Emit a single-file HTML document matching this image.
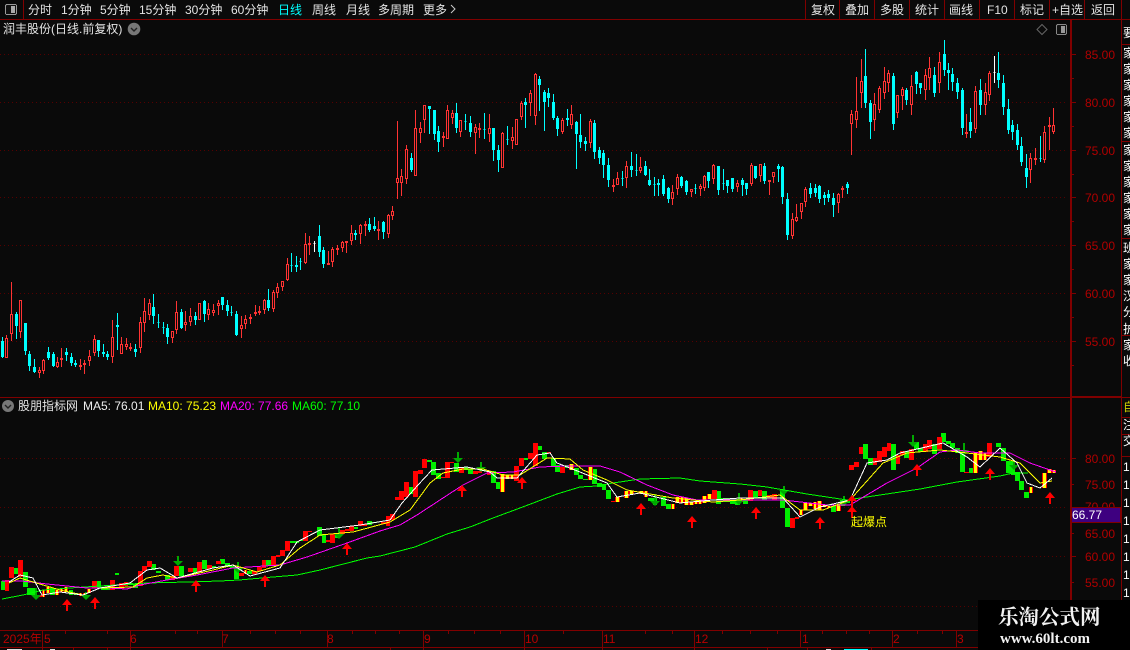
<!DOCTYPE html>
<html lang="zh"><head><meta charset="utf-8"><title>润丰股份</title>
<style>
html,body{margin:0;padding:0;background:#0a0a0a}
#p{position:relative;width:1130px;height:650px;overflow:hidden;background:#0a0a0a;font:12px/14px "Liberation Sans","WenQuanYi Zen Hei","Noto Sans CJK SC",sans-serif;color:#e4e4e4}
#p span{position:absolute;white-space:nowrap}
svg{position:absolute;left:0;top:0}
.a{color:#b00000;left:1085px}
.t{color:#b80000;top:632px;font-size:12px}
#wm{position:absolute;left:978px;top:600px;width:152px;height:50px;background:#000}
#wm div{position:absolute;font-family:"Liberation Serif","Noto Serif CJK SC",serif;font-weight:bold;color:#f2f2f2;white-space:nowrap}
#rc{position:absolute;left:1122px;top:20px;width:8px;height:580px;overflow:hidden;color:#fff}
#rc i{position:absolute;left:1px;font-style:normal;white-space:nowrap}
</style></head><body><div id="p">
<svg width="1130" height="650" shape-rendering="crispEdges" id="s">
<g id="grid" stroke="#560000" stroke-dasharray="1 3" fill="none">
<path d="M0 54.5H1067M0 102.5H1067M0 150.5H1067M0 197.5H1067M0 245.5H1067M0 293.5H1067M0 341.5H1067M0 458.5H1067M0 507.5H1067M0 556.5H1067M0 606.5H1067"/>
</g>
<g id="lo"></g><g id="up"></g>
<g fill="none" stroke="#800000">
<path d="M0 19.5H1130M23.5 0V19M805.5 0V19M839.5 0V19M874.5 0V19M909.5 0V19M944.5 0V19M979.5 0V19M1014.5 0V19M1049.5 0V19M1084.5 0V19"/>
<path d="M1121.5 0V600M0 397.5H1130M0 630.5H978M0 647.5H978" />
<path d="M1071 54.5H1076M1071 102.5H1076M1071 150.5H1076M1071 197.5H1076M1071 245.5H1076M1071 293.5H1076M1071 341.5H1076M1071 78.5H1074M1071 126.5H1074M1071 174.5H1074M1071 221.5H1074M1071 269.5H1074M1071 317.5H1074M1071 365.5H1074M1071 458.5H1076M1071 484.5H1074M1071 533.5H1074M1071 556.5H1076M1071 582.5H1074"/>
<path d="M42.5 631V647M130.5 631V647M222.5 631V647M327.5 631V647M423.5 631V647M524.5 631V647M602.5 631V647M694.5 631V647M800.5 631V647M892.5 631V647M956.5 631V647M65.5 631V634M107.5 631V634M175.5 631V634M197.5 631V634M250.5 631V634M275.5 631V634M300.5 631V634M352.5 631V634M375.5 631V634M399.5 631V634M448.5 631V634M474.5 631V634M500.5 631V634M563.5 631V634M645.5 631V634M672.5 631V634M722.5 631V634M750.5 631V634M777.5 631V634M822.5 631V634M846.5 631V634M869.5 631V634M917.5 631V634M942.5 631V634"/>
<path d="M42.5 648V650M73.5 648V650M107.5 648V650M130.5 648V650M390.5 648V650M423.5 648V650M524.5 648V650M602.5 648V650M694.5 648V650M767.5 648V650M807.5 648V650M871.5 648V650"/>
</g>
<path d="M1070 19h2v581h-2zM1071 396h50v2h-50z" fill="#800000"/>
<path d="M1122 44h8v1h-8zM1122 141h8v1h-8zM1122 238h8v1h-8zM1122 335h8v1h-8zM1122 417h8v1h-8zM1122 434h8v1h-8zM1122 456h8v1h-8z" fill="#800000"/>
<!-- toolbar icon -->
<rect x="5.5" y="4.5" width="11" height="10" rx="1.5" fill="#111" stroke="#999"/><rect x="11" y="6" width="4" height="7" fill="#aaa"/>
<!-- right icons -->
<path d="M1042 24.5l5 5-5 5-5-5z" fill="none" stroke="#666" shape-rendering="auto"/>
<rect x="1056.5" y="24.5" width="10" height="10" rx="1.5" fill="#111" stroke="#888"/><rect x="1061" y="26" width="4" height="7" fill="#999"/>
<!-- chevron circles -->
<g shape-rendering="auto"><circle cx="134" cy="29" r="6.3" fill="#777"/><path d="M131 28l3 3 3-3" fill="none" stroke="#222" stroke-width="1.4"/>
<circle cx="8" cy="406" r="6" fill="#777"/><path d="M5 405l3 3 3-3" fill="none" stroke="#222" stroke-width="1.4"/>
<path d="M451 5l4 4-4 4" fill="none" stroke="#ccc"/></g>
<!-- bottom fragments -->
<path d="M7 649h15v1H7zM50 649h5v1h-5zM826 649h5v1h-5z" fill="#ddd"/><path d="M844 649h24v1h-24z" fill="#0ff"/>
</svg>

<span style="left:28px;top:3px">分时</span><span style="left:61px;top:3px">1分钟</span><span style="left:100px;top:3px">5分钟</span><span style="left:139px;top:3px">15分钟</span><span style="left:185px;top:3px">30分钟</span><span style="left:231px;top:3px">60分钟</span><span style="left:278px;top:3px;color:#0ff">日线</span><span style="left:312px;top:3px">周线</span><span style="left:346px;top:3px">月线</span><span style="left:378px;top:3px">多周期</span><span style="left:423px;top:3px">更多</span>
<span style="left:811px;top:3px">复权</span><span style="left:845px;top:3px">叠加</span><span style="left:880px;top:3px">多股</span><span style="left:915px;top:3px">统计</span><span style="left:949px;top:3px">画线</span><span style="left:987px;top:3px">F10</span><span style="left:1020px;top:3px">标记</span><span style="left:1052px;top:3px">+自选</span><span style="left:1091px;top:3px">返回</span>
<span style="left:3px;top:22px">润丰股份(日线.前复权)</span>

<span class="a" style="top:48px">85.00</span><span class="a" style="top:96px">80.00</span><span class="a" style="top:144px">75.00</span><span class="a" style="top:191px">70.00</span><span class="a" style="top:239px">65.00</span><span class="a" style="top:287px">60.00</span><span class="a" style="top:335px">55.00</span>
<span class="a" style="top:452px">80.00</span><span class="a" style="top:478px">75.00</span><span class="a" style="top:500px">70.00</span><span class="a" style="top:527px">65.00</span><span class="a" style="top:550px">60.00</span><span class="a" style="top:576px">55.00</span>
<svg width="1130" height="16" style="top:507px;z-index:2"><rect x="1071.5" y=".5" width="49" height="15" fill="#3e0080" stroke="#800000"/></svg>
<span style="left:1072px;top:508px;color:#fff;z-index:3">66.77</span>

<span style="left:18px;top:399px">股朋指标网</span>
<span style="left:83px;top:399px;color:#eee">MA5: 76.01</span><span style="left:148px;top:399px;color:#ff0">MA10: 75.23</span><span style="left:220px;top:399px;color:#f0f">MA20: 77.66</span><span style="left:292px;top:399px;color:#0f0">MA60: 77.10</span>
<span style="left:851px;top:515px;color:#ff0">起爆点</span>

<span class="t" style="left:3px">2025年</span><span class="t" style="left:44px">5</span><span class="t" style="left:130px">6</span><span class="t" style="left:222px">7</span><span class="t" style="left:327px">8</span><span class="t" style="left:424px">9</span><span class="t" style="left:525px">10</span><span class="t" style="left:603px">11</span><span class="t" style="left:695px">12</span><span class="t" style="left:802px">1</span><span class="t" style="left:893px">2</span><span class="t" style="left:957px">3</span>

<div id="rc">
<i style="top:6px">要</i><i style="top:26px">家</i><i style="top:42px">家</i><i style="top:58px">家</i><i style="top:74px">家</i><i style="top:90px">家</i><i style="top:106px">家</i><i style="top:123px">家</i><i style="top:139px">家</i><i style="top:155px">家</i><i style="top:171px">家</i><i style="top:187px">家</i><i style="top:203px">家</i><i style="top:221px">班</i><i style="top:237px">家</i><i style="top:253px">家</i><i style="top:269px">汉</i><i style="top:285px">分</i><i style="top:302px">护</i><i style="top:318px">家</i><i style="top:334px">收</i>
<i style="top:380px;color:#cc0">自</i><i style="top:398px">注</i><i style="top:414px">交</i>
<i style="top:440px">1</i><i style="top:458px">1</i><i style="top:476px">1</i><i style="top:494px">1</i><i style="top:512px">1</i><i style="top:530px">1</i><i style="top:548px">1</i><i style="top:566px">1</i>
</div>
<div id="wm"><div style="left:20px;top:6px;font-size:20.5px;line-height:24px">乐淘公式网</div><div style="left:22px;top:32px;font-size:15px;line-height:15px">www.60lt.com</div></div>
</div>
<script>
var K="c 2 337 341 357 358;r 6 335 338 358 358;r 11 282 314 334 341;c 16 312 314 326 339;r 20 300 300 332 338;c 25 323 323 351 355;c 29 351 354 366 371;c 34 359 367 372 373;r 39 367 370 373 378;r 43 359 360 371 374;c 48 347 352 358 360;c 53 352 354 366 367;r 57 357 362 367 368;r 61 348 358 360 367;c 66 348 352 355 361;c 71 353 357 363 366;c 75 360 363 365 367;r 80 359 365 367 370;r 84 360 363 365 374;r 89 350 356 361 366;r 94 335 339 353 356;c 98 340 340 351 357;c 103 344 352 354 357;c 107 351 354 357 360;r 112 320 337 357 363;c 117 313 325 327 350;r 121 337 344 354 354;r 126 338 344 347 350;r 130 343 347 349 351;c 135 344 349 352 357;r 140 317 322 348 353;r 144 298 311 323 332;r 149 299 303 315 320;c 153 294 307 316 324;c 158 314 322 323 328;c 163 322 327 328 334;c 167 324 328 337 344;r 172 331 331 338 343;r 176 301 312 330 334;c 181 309 312 328 329;r 185 311 322 325 331;r 190 308 316 322 326;c 195 312 316 320 325;r 199 303 303 320 320;c 204 300 301 314 322;r 208 303 309 315 320;r 213 304 310 313 316;r 218 300 303 306 315;c 222 297 297 305 310;c 227 300 305 311 316;c 231 306 312 313 316;c 236 311 314 335 336;r 241 316 325 329 338;r 245 315 319 324 329;r 250 314 317 319 324;r 255 305 312 314 316;r 259 306 311 313 315;r 264 299 300 310 314;c 268 289 300 308 311;r 273 290 292 309 312;r 277 283 287 293 298;r 282 281 281 287 291;r 287 258 264 280 281;c 291 253 265 266 272;c 296 256 265 267 272;c 300 258 261 262 270;r 305 233 244 263 264;r 309 236 243 245 255;w 314 241 243 243 252;c 319 225 236 252 257;c 323 247 250 264 268;r 328 251 263 265 265;r 332 247 249 262 267;r 337 245 248 250 255;r 342 241 242 248 252;r 346 241 241 243 253;r 351 225 233 241 245;c 355 230 233 235 240;r 360 224 225 234 244;r 365 221 224 226 236;c 369 218 224 230 232;c 374 217 226 229 231;r 378 221 229 230 240;c 383 221 222 232 239;r 388 214 215 234 238;r 392 206 211 216 220;r 397 121 178 183 199;r 401 169 176 183 196;r 406 145 149 179 184;c 411 153 158 170 172;r 415 110 128 176 176;r 420 122 128 133 143;r 424 105 105 120 133;c 429 107 106 109 134;c 434 110 110 134 140;c 438 126 131 142 152;r 443 132 136 138 147;r 447 105 110 139 139;r 452 110 113 118 124;c 456 103 113 128 133;r 460 120 120 132 137;c 465 114 121 122 130;c 470 116 123 132 137;r 475 124 127 133 154;r 479 123 128 130 138;c 484 113 129 130 139;r 489 114 128 134 142;c 493 128 128 150 161;c 498 145 150 160 172;r 502 132 133 168 168;c 507 126 139 140 145;r 512 127 137 141 149;r 516 119 119 145 145;r 521 101 103 117 120;c 525 98 102 105 128;r 530 90 93 103 116;r 535 73 74 116 125;c 539 76 79 85 111;c 544 90 92 102 131;c 548 88 93 98 107;c 553 94 102 118 120;c 557 116 118 129 136;r 562 118 120 132 134;c 567 109 118 120 126;r 571 105 114 125 129;c 576 121 122 134 169;c 580 114 135 142 148;c 585 137 141 144 151;r 590 119 121 143 148;c 594 120 123 152 159;c 599 147 150 158 164;c 603 150 153 165 178;c 608 158 165 180 187;r 613 179 185 187 192;r 617 172 178 185 185;c 622 171 178 179 186;r 626 161 166 178 188;c 631 152 166 170 177;c 636 154 170 171 176;r 640 157 167 171 173;c 645 161 166 175 176;c 649 169 180 185 186;c 654 177 184 185 196;c 658 179 183 185 196;c 663 175 179 194 196;c 668 187 188 199 203;r 672 185 192 199 205;r 677 174 177 189 195;c 681 176 177 186 188;c 686 180 181 192 195;r 691 189 189 192 197;c 695 184 188 189 194;r 700 184 186 189 196;r 704 175 176 188 191;c 708 172 172 181 188;r 713 164 165 179 184;c 718 166 166 190 195;c 723 169 183 184 190;c 727 180 180 186 193;c 732 178 178 189 192;r 737 180 183 187 192;c 742 178 180 185 196;c 746 183 183 189 195;r 751 163 165 184 186;c 755 166 166 178 179;r 760 164 164 176 182;c 764 163 166 181 184;r 769 180 180 182 195;r 773 172 172 177 183;c 778 164 166 169 182;c 782 166 167 197 204;c 787 193 199 235 240;r 792 213 219 236 239;r 796 204 217 221 222;r 801 204 203 212 219;r 805 187 189 202 207;c 810 183 188 194 198;c 815 184 188 193 197;c 819 185 186 199 203;c 824 192 195 198 205;c 828 190 194 198 202;c 833 193 198 205 217;r 838 193 194 203 213;r 842 186 188 190 198;c 847 182 184 188 194;r 851 110 114 124 155;r 856 77 111 120 128;r 861 59 81 93 108;c 865 49 76 103 108;c 870 100 103 122 139;r 874 93 104 120 131;r 879 86 88 110 113;r 884 67 81 93 99;r 888 70 73 83 92;c 893 73 76 124 130;r 897 95 95 113 118;r 902 87 89 96 110;c 906 88 90 100 105;r 911 75 86 105 115;c 916 71 72 84 94;c 920 83 83 88 94;r 925 69 75 90 100;r 929 57 68 78 90;c 934 67 75 93 97;r 939 52 62 83 93;c 944 40 54 70 76;c 948 63 70 73 90;c 952 68 74 82 91;c 957 78 83 92 99;c 962 88 90 128 135;r 966 114 132 133 138;c 970 108 122 131 138;r 975 86 91 129 133;c 980 79 90 105 115;r 985 83 92 105 115;r 989 71 73 95 101;w 994 56 72 72 83;c 998 52 73 80 88;c 1003 75 83 107 115;c 1008 99 109 130 134;c 1012 120 125 132 140;c 1017 124 130 145 150;c 1021 137 146 162 166;c 1026 154 168 177 188;r 1030 153 158 170 183;r 1035 148 158 158 165;c 1040 136 158 158 162;r 1044 126 132 160 163;r 1049 117 125 127 150;r 1053 108 125 132 134";
var B="g 1 5 581 590;r 5 9 580 591;r 9 14 567 578;g 14 19 568 574;r 18 23 560 577;g 23 28 572 587;g 27 32 588 595;g 32 37 588 595;r 37 42 595 597;y 42 45 590 597;y 46 50 587 593;g 50 55 588 595;y 55 59 590 595;y 60 63 589 592;y 64 68 587 592;g 69 73 590 595;g 74 78 593 595;y 79 82 593 596;y 83 86 593 597;y 87 91 589 593;r 92 97 581 588;g 97 101 581 588;g 101 106 587 590;g 106 110 587 590;r 110 115 580 590;g 115 119 573 575;r 119 124 583 589;r 124 128 582 586;g 128 133 583 585;g 133 138 584 588;r 138 143 571 586;r 142 147 566 571;r 147 152 561 567;g 151 156 564 570;g 156 161 571 573;g 165 170 575 580;r 170 175 576 580;r 174 179 566 576;g 179 184 566 576;r 188 193 568 572;g 193 197 568 573;r 197 202 562 572;g 202 207 560 569;r 207 212 565 569;g 212 216 566 568;r 216 221 561 564;g 220 225 559 564;g 225 230 563 567;g 230 234 566 568;g 234 239 567 579;r 239 244 573 576;y 244 247 570 574;g 247 252 571 574;r 252 257 571 574;r 257 262 567 571;r 262 266 560 568;g 266 271 560 566;r 271 276 556 565;r 276 280 555 557;r 280 285 550 556;r 285 290 541 551;g 290 299 541 543;g 299 304 540 541;r 303 308 531 541;r 308 312 531 532;g 317 322 527 536;g 322 326 534 543;r 326 330 540 542;r 330 335 534 543;g 335 340 534 538;r 340 345 530 534;r 345 350 529 531;r 349 354 526 531;g 354 358 527 529;r 358 363 521 526;r 363 367 524 526;g 367 372 521 525;g 372 377 522 523;r 381 386 522 524;r 386 390 516 526;r 390 395 514 520;r 395 404 497 500;r 399 404 491 499;r 404 409 482 497;g 409 414 487 494;r 413 418 471 497;r 418 423 470 474;r 422 427 459 468;g 427 432 460 462;g 431 436 462 475;g 436 441 473 479;r 441 446 477 478;r 445 450 462 478;r 450 454 462 463;g 454 459 463 472;r 459 464 467 473;g 464 468 467 470;g 468 473 469 474;r 473 478 471 474;r 478 482 471 473;g 482 486 470 471;r 487 491 471 475;g 491 496 471 483;g 496 501 482 489;y 500 505 474 492;y 505 510 475 479;y 510 514 475 479;r 514 519 466 481;r 519 524 458 466;g 524 528 458 460;r 528 533 453 459;r 533 538 443 466;g 537 542 446 450;g 542 547 452 459;r 547 551 452 453;g 551 556 458 467;g 555 560 465 472;r 560 565 467 473;g 565 569 465 468;y 569 574 464 470;g 574 579 468 475;g 578 583 475 479;g 583 588 479 480;y 588 593 467 480;g 592 597 469 484;g 597 602 483 487;g 602 606 484 490;g 606 611 490 499;r 611 615 501 502;y 615 620 497 502;y 624 629 491 498;y 629 634 491 494;y 639 644 491 494;y 644 648 491 497;g 648 653 498 501;g 653 657 498 505;g 661 666 497 506;g 666 671 504 509;y 671 675 504 509;y 675 680 497 503;y 680 684 497 503;y 684 689 498 505;y 689 694 502 505;y 694 698 501 504;y 698 702 501 504;y 702 707 496 503;y 707 712 494 499;r 712 717 490 499;g 716 721 491 504;g 721 725 498 502;g 725 730 498 502;g 730 735 498 504;g 735 740 499 505;y 740 743 498 502;g 743 748 499 504;r 748 753 490 501;g 753 758 491 498;r 758 762 490 496;g 762 767 491 500;r 767 772 495 498;r 772 777 494 500;g 780 785 491 508;g 785 790 508 527;r 790 795 518 528;r 795 799 517 519;y 799 803 510 515;y 803 808 503 510;y 808 813 503 506;y 813 817 502 509;y 817 822 501 510;y 822 827 505 507;y 827 831 506 508;g 831 836 506 512;y 836 841 505 511;g 840 845 500 506;g 845 850 500 503;r 849 854 465 470;r 854 859 462 467;r 859 863 447 454;g 863 868 444 459;g 868 873 458 465;r 873 877 458 465;r 877 882 451 462;r 882 887 447 457;r 887 891 443 451;g 891 896 444 470;r 896 900 455 464;r 900 905 451 455;g 904 909 451 458;r 909 914 449 460;g 914 919 442 449;g 918 923 448 452;r 923 928 444 452;r 927 932 440 449;g 932 937 444 454;r 937 942 437 449;g 941 946 433 442;g 946 951 441 444;g 950 955 443 448;g 955 960 448 453;g 960 965 452 472;r 964 969 472 473;g 969 974 468 473;y 973 978 452 473;y 978 983 451 460;y 983 987 453 460;r 987 992 443 457;g 996 1001 443 447;g 1001 1006 448 461;g 1006 1011 461 473;g 1011 1015 461 475;g 1015 1020 472 481;g 1019 1024 481 490;g 1024 1029 492 498;y 1029 1033 487 493;y 1042 1047 473 488;y 1047 1052 469 473;y 1052 1056 470 473";
var L=[["#0f0","2,599 23,595 43,590 70,588 100,586 147,583 187,582 220,581 239,580 273,577 297,575 320,570 367,558 380,556 415,547 447,534 470,527 493,518 520,508 557,494 580,487 597,486 613,483 640,479 680,478 700,481 740,484 767,487 807,494 847,500 860,498 880,495 920,489 957,482 1000,476 1013,473 1028,473"],
["#f0f","2,581 22,581 47,584 67,586 87,588 107,588 127,589 140,585 167,580 197,575 233,568 280,565 307,557 347,543 380,531 400,525 417,515 443,498 463,485 487,473 513,472 540,467 567,466 600,466 620,472 647,485 673,495 697,500 740,500 783,500 827,505 850,505 887,483 917,468 940,452 957,450 980,453 1010,453 1030,463 1050,470 1056,472"],
["#ff0","9,583 20,578 33,582 60,590 83,595 100,588 133,587 147,578 163,575 177,578 213,570 233,565 257,572 280,565 300,548 320,535 353,532 390,522 410,510 430,483 443,473 463,469 483,469 503,475 520,475 547,458 570,459 583,470 607,480 627,490 673,498 713,502 740,500 780,495 800,510 823,510 850,500 883,463 907,453 940,450 967,453 1000,457 1020,463 1040,483 1052,481"],
["#fff","9,582 20,575 33,578 42,595 60,592 83,595 100,588 130,583 147,570 160,568 177,578 213,568 233,565 250,576 280,568 297,542 320,530 360,525 390,520 402,503 418,485 432,470 467,467 490,472 497,478 517,478 537,455 550,453 557,463 580,472 607,483 617,497 640,493 680,503 713,500 740,498 783,498 800,517 820,507 850,500 867,463 887,460 900,453 943,443 967,457 980,467 1000,448 1017,463 1027,483 1040,488 1052,478"]];
var UA=[[67,599],[95,597],[196,580],[265,575],[347,543],[462,485],[522,477],[641,503],[692,516],[756,507],[820,517],[852,495],[852,506],[917,464],[990,468],[1050,492]];
var DA=[[35,588,600],[85,592,600],[177,556,566],[237,562,573],[338,527,539],[457,452,463],[480,462,472],[654,494,506],[738,493,505],[783,486,495],[843,496,506],[912,435,447],[963,443,455],[1013,460,470]];
var c={r:"",c:"",w:""},i,f,x,h="";
K.split(";").forEach(function(e){f=e.split(" ");x=+f[1];var a=+f[2],t=+f[3],b=+f[4],l=+f[5];
 if(b<t){var q=t;t=b;b=q}
 if(f[0]=="r"){c.r+="M"+(x+.5)+" "+a+"V"+t+"M"+(x+.5)+" "+b+"V"+l+"M"+(x-.5)+" "+(t+.5)+"h2v"+Math.max(b-t-1,1)+"h-2z"}
 else{var k=f[0];c[k]+="M"+(x+.5)+" "+a+"V"+l+"M"+(x-.5)+" "+(t+.5)+"h2v"+Math.max(b-t-1,0)+"h-2z"}
});
h='<path fill="none" stroke="#ff3333" d="'+c.r+'"/><path fill="#0ff" stroke="#0ff" d="'+c.c+'"/><path fill="#fff" stroke="#fff" d="'+c.w+'"/>';
document.getElementById("up").innerHTML=h;
var R="",G="",Y="";
B.split(";").forEach(function(e){f=e.split(" ");var a=+f[1],b=+f[2],t=+f[3],d=+f[4],s="M"+a+" "+t+"H"+b+"V"+d+"H"+a+"z";
 if(f[0]=="r")R+=s;else if(f[0]=="g")G+=s;else{R+=s;Y+="M"+(a+1)+" "+t+"H"+(b-1)+"V"+d+"H"+(a+1)+"z"}});
h='<path fill="#0e0" d="'+G+'"/><path fill="#f00" d="'+R+'"/><path fill="#ff0" d="'+Y+'"/>';
DA.forEach(function(d){h+='<path fill="#0a0" d="M'+d[0]+" "+d[1]+"h2v"+(d[2]-d[1]-5)+"h4l-5 5-5-5h4z"+'" shape-rendering="auto"/>'});
L.forEach(function(l){h+='<polyline fill="none" stroke="'+l[0]+'" stroke-width="1" points="'+l[1]+'"/>'});
UA.forEach(function(u){h+='<path fill="#f00" d="M'+u[0]+" "+u[1]+"l5 6h-4v6h-2v-6h-4z"+'" shape-rendering="auto"/>'});
document.getElementById("lo").innerHTML=h;
</script>
</body></html>
